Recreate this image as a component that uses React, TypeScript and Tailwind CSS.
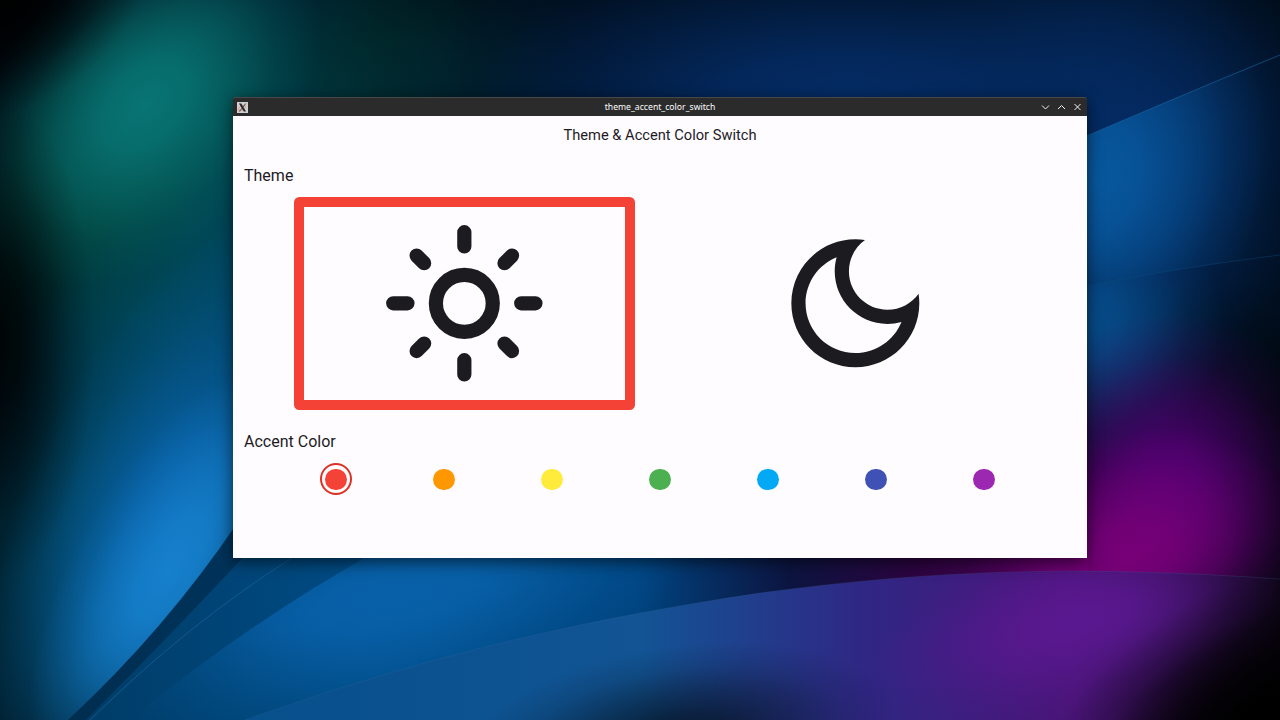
import React from "react";

const accents = [
  { name: "red", fill: "bg-[#f44336]" },
  { name: "orange", fill: "bg-[#ff9800]" },
  { name: "yellow", fill: "bg-[#ffeb3b]" },
  { name: "green", fill: "bg-[#4caf50]" },
  { name: "light blue", fill: "bg-[#03a9f4]" },
  { name: "indigo", fill: "bg-[#3f51b5]" },
  { name: "purple", fill: "bg-[#9c27b0]" },
];

type GlowProps = { cx: number; cy: number; rx: number; ry: number; rot?: number; color: string; o?: number };

function Glow({ cx, cy, rx, ry, rot = 0, color, o = 1 }: GlowProps) {
  return (
    <ellipse rx={rx} ry={ry} transform={`translate(${cx} ${cy}) rotate(${rot})`} fill={`url(#g-${color})`} opacity={o} />
  );
}

const glowColors: Record<string, string> = {
  teal: "#087474",
  green: "#00402c",
  deep: "#004a62",
  blue: "#0860a8",
  bright: "#1680cc",
  navy: "#042c66",
  purple: "#500074",
  magenta: "#780078",
  violet: "#5a1890",
  black: "#000000",
};

function Wallpaper() {
  return (
    <svg className="absolute inset-0 h-full w-full" viewBox="0 0 1280 720" aria-hidden="true">
      <defs>
        {Object.entries(glowColors).map(([k, c]) => (
          <radialGradient key={k} id={`g-${k}`}>
            <stop offset="0" stopColor={c} />
            <stop offset="0.25" stopColor={c} stopOpacity="0.86" />
            <stop offset="0.5" stopColor={c} stopOpacity="0.54" />
            <stop offset="0.75" stopColor={c} stopOpacity="0.2" />
            <stop offset="1" stopColor={c} stopOpacity="0" />
          </radialGradient>
        ))}
        <linearGradient id="lower" x1="70" y1="0" x2="1100" y2="0" gradientUnits="userSpaceOnUse">
          <stop offset="0" stopColor="#003c66" />
          <stop offset="0.3" stopColor="#004c86" />
          <stop offset="0.55" stopColor="#004480" />
          <stop offset="0.7" stopColor="#0c1440" />
          <stop offset="0.82" stopColor="#2c0440" />
          <stop offset="1" stopColor="#5c0064" />
        </linearGradient>
        <linearGradient id="ribbon" x1="250" y1="0" x2="1280" y2="0" gradientUnits="userSpaceOnUse">
          <stop offset="0" stopColor="#06508c" />
          <stop offset="0.38" stopColor="#125494" />
          <stop offset="0.6" stopColor="#302684" />
          <stop offset="0.8" stopColor="#4a1478" />
          <stop offset="1" stopColor="#10061c" />
        </linearGradient>
        <clipPath id="lowerClip">
          <path d="M68 720Q165 630 238 522L238 540H1088V720Z" />
        </clipPath>
        <clipPath id="petalClip">
          <path d="M130 720Q245 625 375 552H900V720Z" />
        </clipPath>
        <clipPath id="ribbonClip">
          <path d="M245 720C430 655 580 620 760 593C930 570 1080 565 1280 579V720Z" />
        </clipPath>
        <clipPath id="rightClip">
          <path d="M1040 156Q1165 102 1280 55V255Q1165 269 1040 295Z" />
        </clipPath>
        <clipPath id="rightLow">
          <path d="M1040 295Q1165 269 1280 255V470H1040Z" />
        </clipPath>
      </defs>
      <rect width="1280" height="720" fill="#000a14" />
      <Glow cx={190} cy={230} rx={250} ry={420} rot={24} color="deep" />
      <Glow cx={115} cy={170} rx={170} ry={260} rot={38} color="green" o={0.7} />
      <Glow cx={145} cy={105} rx={140} ry={210} rot={42} color="teal" />
      <Glow cx={400} cy={80} rx={200} ry={160} color="green" o={0.4} />
      <Glow cx={850} cy={100} rx={520} ry={180} color="navy" />
      <Glow cx={1120} cy={180} rx={240} ry={300} color="navy" />
      <g clipPath="url(#rightClip)">
        <Glow cx={1095} cy={180} rx={170} ry={220} rot={20} color="blue" o={0.85} />
      </g>
      <g clipPath="url(#rightLow)">
        <Glow cx={1085} cy={325} rx={140} ry={140} rot={20} color="blue" o={0.7} />
      </g>
      <Glow cx={140} cy={520} rx={200} ry={380} rot={24} color="deep" />
      <Glow cx={170} cy={520} rx={150} ry={330} rot={24} color="blue" />
      <Glow cx={170} cy={570} rx={95} ry={230} rot={30} color="bright" />
      <rect x="1040" y="470" width="240" height="130" fill="#100010" opacity="0.3" />
      <g clipPath="url(#lowerClip)">
        <rect x="40" y="500" width="1048" height="220" fill="url(#lower)" />
      </g>
      <g clipPath="url(#petalClip)">
        <Glow cx={400} cy={600} rx={310} ry={115} rot={-14} color="blue" />
        <Glow cx={390} cy={590} rx={190} ry={50} rot={-14} color="blue" />
      </g>
      <path d="M68 720Q165 630 238 522L250 550Q180 625 86 720Z" fill="#001a30" opacity="0.4" />
      <path d="M90 720Q190 622 292 558" fill="none" stroke="#1764a0" strokeWidth="1" opacity="0.7" />
      <path d="M1040 156Q1165 102 1280 55" fill="none" stroke="#1768a0" strokeWidth="1" opacity="0.6" />
      <path d="M1040 295Q1165 269 1280 255" fill="none" stroke="#0d5080" strokeWidth="1" opacity="0.4" />
      <Glow cx={1280} cy={460} rx={160} ry={220} color="black" o={0.5} />
      <Glow cx={1165} cy={490} rx={165} ry={180} rot={18} color="purple" />
      <Glow cx={1130} cy={555} rx={170} ry={120} rot={-20} color="magenta" />
      <g clipPath="url(#ribbonClip)">
        <rect x="200" y="560" width="1080" height="160" fill="url(#ribbon)" />
        <Glow cx={1080} cy={620} rx={210} ry={90} rot={-15} color="violet" />
        <Glow cx={1275} cy={725} rx={270} ry={150} rot={-28} color="black" />
        <Glow cx={1275} cy={725} rx={200} ry={110} rot={-28} color="black" />
        <Glow cx={680} cy={740} rx={220} ry={95} rot={-8} color="black" o={0.65} />
      </g>
      <path d="M245 720C430 655 580 620 760 593C930 570 1080 565 1280 579" fill="none" stroke="#456ca0" strokeWidth="1" opacity="0.2" />
      <Glow cx={0} cy={0} rx={160} ry={110} rot={-30} color="black" />
      <Glow cx={0} cy={340} rx={95} ry={240} color="black" o={0.85} />
    </svg>
  );
}

function TitleBar() {
  return (
    <header className="grid h-[19px] grid-cols-[1fr_auto_1fr] items-center rounded-t-[3px] border-t border-[#484848] bg-[#2b2b2c] px-1">
      <svg className="h-[11px] w-[11px]" viewBox="0 0 11 11">
        <rect width="11" height="11" fill="#cfcfd2" />
        <ellipse cx="5" cy="6" rx="4" ry="2" transform="rotate(-35 5 6)" fill="none" stroke="#e08a70" strokeWidth="0.8" />
        <path d="M2 1.5h2.2L9 9.5H6.8Z" fill="#222228" />
        <path d="M8.8 1.5L2.3 9.5" stroke="#222228" strokeWidth="0.8" />
      </svg>
      <span className="pt-px font-['Noto_Sans',sans-serif] text-[8.67px] leading-none text-[#fcfcfc]">theme_accent_color_switch</span>
      <svg className="h-[10px] w-[42px] justify-self-end" viewBox="0 0 42 10" fill="none" stroke="#f4f4f4" strokeWidth="1">
        <path d="M1 3.5l3.5 3.5L8 3.5M17 7l3.5-3.5L24 7M33.5 2l6 6M39.5 2l-6 6" />
      </svg>
    </header>
  );
}

function SunIcon() {
  return (
    <svg className="h-[170.67px] w-[170.67px]" viewBox="0 0 24 24" fill="none" stroke="#1c1b1f" strokeWidth="2" strokeLinecap="round">
      <circle cx="12" cy="12" r="4" />
      <path d="M12 2v2M12 20v2M2 12h2M20 12h2M5.29 5.29l1.06 1.06M17.65 17.65l1.06 1.06M18.71 5.29l-1.06 1.06M6.35 17.65l-1.06 1.06" />
    </svg>
  );
}

function MoonIcon() {
  return (
    <svg className="h-[170.67px] w-[170.67px]" viewBox="0 0 24 24" fill="#1c1b1f">
      <path d="M9.37 5.51c-.18.64-.27 1.31-.27 1.99 0 4.08 3.32 7.4 7.4 7.4.68 0 1.35-.09 1.99-.27C17.45 17.19 14.93 19 12 19c-3.86 0-7-3.14-7-7 0-2.93 1.81-5.45 4.37-6.49zM12 3c-4.97 0-9 4.03-9 9s4.03 9 9 9 9-4.03 9-9c0-.46-.04-.92-.1-1.36-.98 1.37-2.58 2.26-4.4 2.26-2.98 0-5.4-2.42-5.4-5.4 0-1.81.89-3.42 2.26-4.4C12.92 3.04 12.46 3 12 3z" />
    </svg>
  );
}

export default function App() {
  return (
    <div className="relative flex h-[720px] w-[1280px] flex-col items-start overflow-hidden bg-black pt-[97px] pl-[233px] font-[Roboto,sans-serif]">
      <Wallpaper />
      <div className="relative w-[854px] rounded-t-[3px] shadow-[0_4px_16px_rgba(0,0,0,0.6)]">
        <TitleBar />
        <main className="flex h-[442px] flex-col bg-[#fffcff] px-[11px] text-[#1c1b1f]">
          <h1 className="mt-[9px] text-center text-[14.67px] leading-5">Theme &amp; Accent Color Switch</h1>
          <h2 className="mt-[21px] text-base leading-5">Theme</h2>
          <div className="mt-[11px] flex justify-evenly">
            <button className="flex h-[213px] w-[341.33px] items-center justify-center rounded-[5.33px] border-[10.67px] border-[#f44336]">
              <SunIcon />
            </button>
            <button className="flex h-[213px] w-[341.33px] items-center justify-center">
              <MoonIcon />
            </button>
          </div>
          <h2 className="mt-[22px] text-base leading-5">Accent Color</h2>
          <div className="mt-[11.33px] flex justify-evenly">
            {accents.map((a, i) => (
              <button
                key={a.name}
                aria-label={a.name}
                className={
                  i === 0
                    ? "flex h-8 w-8 items-center justify-center rounded-full border-2 border-[#dc3226]"
                    : "flex h-8 w-8 items-center justify-center rounded-full"
                }
              >
                <span className={`h-[21.33px] w-[21.33px] shrink-0 rounded-full ${a.fill}`} />
              </button>
            ))}
          </div>
        </main>
      </div>
    </div>
  );
}
